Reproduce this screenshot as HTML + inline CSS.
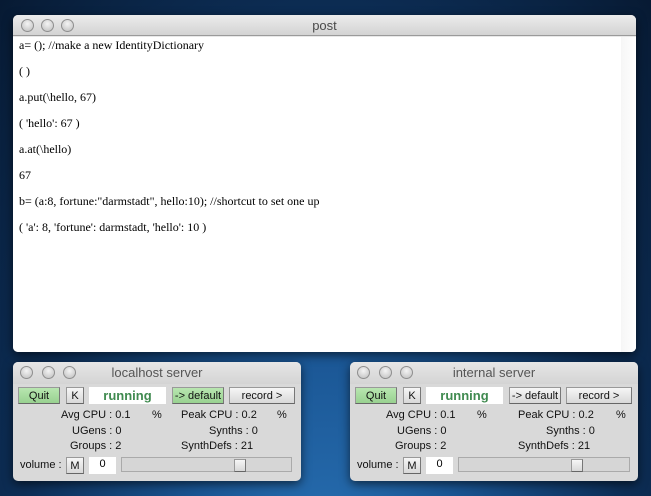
<!DOCTYPE html>
<html><head><meta charset="utf-8"><style>
*{margin:0;padding:0;box-sizing:border-box}
body{width:651px;height:496px;overflow:hidden;position:relative;font-family:"Liberation Sans",sans-serif;
background:radial-gradient(ellipse at 50% 120%,#2a74b8 0%,#1a5593 30%,#0d2f58 65%,#071a33 100%);}
.win{position:absolute;background:#e8e8e8;border-radius:5px;box-shadow:0 3px 10px rgba(0,0,0,.6);overflow:hidden}
.tb{position:absolute;left:0;right:0;top:0;height:21px;background:linear-gradient(#ececec,#d3d3d3);border-bottom:1px solid #9a9a9a;text-align:center;font-size:13px;color:#4a4a4a;line-height:21px}
.dot{position:absolute;top:4px;width:13px;height:13px;border-radius:50%;background:radial-gradient(circle at 50% 35%,#f4f4f4,#bdbdbd);border:1px solid #8f8f8f}
.post{left:13px;top:15px;width:623px;height:337px}
.content{position:absolute;left:0;top:22px;right:0;bottom:0;background:#fff;font-family:"Liberation Serif",serif;font-size:12px;color:#000}
.content div{position:absolute;left:6px;white-space:pre}
.sb{position:absolute;right:0;top:0;bottom:0;width:15px;background:linear-gradient(90deg,#f6f6f6,#fff)}
.srv{top:362px;width:288px;height:119px;background:#d9d9d9}
.srv .tb{background:linear-gradient(#e6e6e6,#d4d4d4);border-bottom:none;font-size:13px;color:#555;height:22px}
.b{position:absolute;height:17px;font-size:11px;line-height:16px;text-align:center;color:#111;background:linear-gradient(#f6f6f6,#d8d8d8);border:1px solid #999;border-right-color:#777;border-bottom-color:#666}
.g{background:linear-gradient(#b8e6b0,#98d190)}
.f{position:absolute;background:#fff;height:17px}
.l{position:absolute;font-size:11px;color:#111;white-space:pre}
</style></head><body>

<div class="win post">
<div class="tb">post<span class="dot" style="left:8px"></span><span class="dot" style="left:28px"></span><span class="dot" style="left:48px"></span></div>
<div class="content">
<div style="top:1px">a= (); //make a new IdentityDictionary</div>
<div style="top:27px">( )</div>
<div style="top:53px">a.put(\hello, 67)</div>
<div style="top:79px">( 'hello': 67 )</div>
<div style="top:105px">a.at(\hello)</div>
<div style="top:131px">67</div>
<div style="top:157px">b= (a:8, fortune:"darmstadt", hello:10); //shortcut to set one up</div>
<div style="top:183px">( 'a': 8, 'fortune': darmstadt, 'hello': 10 )</div>
<span class="sb"></span>
</div>
</div>

<div class="win srv" style="left:13px">
<div class="tb">localhost server<span class="dot" style="left:7px"></span><span class="dot" style="left:29px"></span><span class="dot" style="left:50px"></span></div>
<div class="b g" style="left:5px;top:25px;width:42px">Quit</div>
<div class="b" style="left:53px;top:25px;width:18px">K</div>
<div class="f" style="left:76px;top:25px;width:77px;color:#3f8a4f;font-weight:bold;font-size:13px;text-align:center;line-height:17px">running</div>
<div class="b g" style="left:159px;top:25px;width:52px">-&gt; default</div>
<div class="b" style="left:216px;top:25px;width:66px">record &gt;</div>
<div class="l" style="left:48px;top:47px">Avg CPU : 0.1</div><div class="l" style="left:139px;top:47px">%</div>
<div class="l" style="left:168px;top:47px">Peak CPU : 0.2</div><div class="l" style="left:264px;top:47px">%</div>
<div class="l" style="left:59px;top:63px">UGens : 0</div>
<div class="l" style="left:196px;top:63px">Synths : 0</div>
<div class="l" style="left:57px;top:78px">Groups : 2</div>
<div class="l" style="left:168px;top:78px">SynthDefs : 21</div>
<div class="l" style="left:7px;top:97px">volume :</div>
<div class="b" style="left:53px;top:95px;width:18px">M</div>
<div class="f" style="left:76px;top:95px;width:27px;font-size:11px;text-align:center;line-height:14px">0</div>
<div style="position:absolute;left:108px;top:95px;width:171px;height:15px;border:1px solid #aaa;background:#d6d6d6"></div>
<div class="b" style="left:221px;top:97px;width:12px;height:13px"></div>
</div>

<div class="win srv" style="left:350px">
<div class="tb">internal server<span class="dot" style="left:7px"></span><span class="dot" style="left:29px"></span><span class="dot" style="left:50px"></span></div>
<div class="b g" style="left:5px;top:25px;width:42px">Quit</div>
<div class="b" style="left:53px;top:25px;width:18px">K</div>
<div class="f" style="left:76px;top:25px;width:77px;color:#3f8a4f;font-weight:bold;font-size:13px;text-align:center;line-height:17px">running</div>
<div class="b" style="left:159px;top:25px;width:52px">-&gt; default</div>
<div class="b" style="left:216px;top:25px;width:66px">record &gt;</div>
<div class="l" style="left:36px;top:47px">Avg CPU : 0.1</div><div class="l" style="left:127px;top:47px">%</div>
<div class="l" style="left:168px;top:47px">Peak CPU : 0.2</div><div class="l" style="left:266px;top:47px">%</div>
<div class="l" style="left:47px;top:63px">UGens : 0</div>
<div class="l" style="left:196px;top:63px">Synths : 0</div>
<div class="l" style="left:45px;top:78px">Groups : 2</div>
<div class="l" style="left:168px;top:78px">SynthDefs : 21</div>
<div class="l" style="left:7px;top:97px">volume :</div>
<div class="b" style="left:53px;top:95px;width:18px">M</div>
<div class="f" style="left:76px;top:95px;width:27px;font-size:11px;text-align:center;line-height:14px">0</div>
<div style="position:absolute;left:108px;top:95px;width:172px;height:15px;border:1px solid #aaa;background:#d6d6d6"></div>
<div class="b" style="left:221px;top:97px;width:12px;height:13px"></div>
</div>

</body></html>
